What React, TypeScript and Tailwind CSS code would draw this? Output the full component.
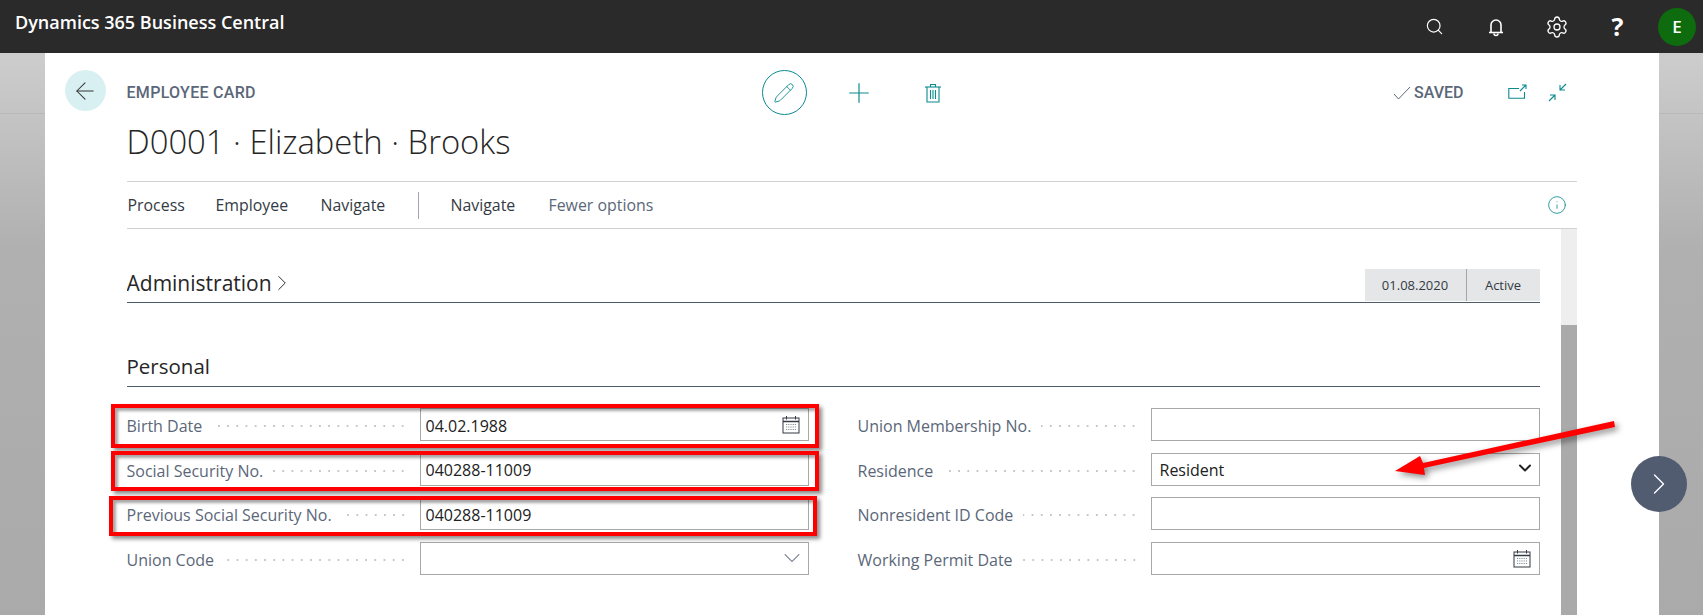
import { ArrowLeft, ChevronDown, ChevronRight, Info, Pencil, Plus, Search, Settings } from 'lucide-react';

function CalendarIcon() {
  return (
    <svg width="18" height="19" viewBox="0 0 18 19" fill="none" className="text-[#333a44]">
      <rect x="1" y="3" width="16" height="15" stroke="currentColor" />
      <path d="M1 6.5h16" stroke="currentColor" strokeWidth="1.5" />
      <path d="M4.5 1v3.5M13.5 1v3.5" stroke="currentColor" />
      <path d="M4 9.5h10M4 12h10M4 14.5h10" stroke="#8a8f96" strokeWidth="1.2" strokeDasharray="1.2 1" />
    </svg>
  );
}

function Field({
  label,
  value,
  right,
  dark,
}: {
  label: string;
  value?: string;
  right?: React.ReactNode;
  dark?: boolean;
}) {
  return (
    <div className="flex h-[33px] items-center">
      <div className="flex w-[293px] items-center pr-[12px]">
        <span className="pt-[3px] text-[16px] whitespace-nowrap text-[#5b6779]">{label}</span>
        <div className="mt-[3px] ml-[10px] h-[4px] flex-1 bg-[radial-gradient(circle,#c3c7cd_1px,transparent_1.3px)] bg-[length:9.2px_4px] bg-right bg-repeat-x" />
      </div>
      <div
        className={`flex h-full flex-1 items-center justify-between border border-[#a8a8a8] pr-[8px] text-[16px] text-[#212121] ${
          dark ? 'pl-[8px]' : 'pl-[5px]'
        }`}
      >
        <span className="pt-[2px]">{value}</span>
        {right}
      </div>
    </div>
  );
}

export default function App() {
  return (
    <div className="relative flex h-[615px] w-[1703px] flex-col overflow-hidden font-['Open_Sans',sans-serif]">
      {/* Top bar */}
      <header className="flex h-[53px] flex-shrink-0 items-center bg-[#2a2a2a] pl-[15px] text-white">
        <span className="mb-[9px] text-[18px] font-semibold">Dynamics 365 Business Central</span>
        <div className="ml-auto flex items-center pr-[7px]">
          <div className="flex w-[61px] justify-center">
            <Search size={19} strokeWidth={1.5} />
          </div>
          <div className="flex w-[61px] justify-center">
            <svg width="18" height="20" viewBox="0 0 18 20" fill="none" stroke="currentColor" strokeWidth="1.6">
              <path d="M4 15V8a5 5 0 0 1 10 0v7" />
              <path d="M2 15.5h14" />
              <path d="M7 16.5a2 2 0 0 0 4 0" />
            </svg>
          </div>
          <div className="flex w-[61px] justify-center">
            <Settings size={24} strokeWidth={1.3} />
          </div>
          <div className="flex w-[61px] justify-center text-[25px] leading-none font-bold">?</div>
          <div className="ml-[10px] flex h-[38px] w-[38px] items-center justify-center rounded-full bg-[#0e6b0e] text-[17px] font-semibold">
            E
          </div>
        </div>
      </header>

      {/* Dimmed page behind the card */}
      <div className="flex min-h-0 flex-1 justify-center bg-[linear-gradient(to_bottom,transparent_60px,rgba(0,0,0,0.06)_60px,rgba(0,0,0,0.06)_61px,transparent_61px),linear-gradient(to_bottom,#cdcdcd,#b0b0b0_35%,#aaaaaa)]">
        <div className="flex w-[1614px] bg-white">
          <div className="w-[82px] flex-shrink-0 pt-[17px] pl-[20px]">
            <div className="flex h-[41px] w-[41px] items-center justify-center rounded-full bg-[#d9f0f3] text-[#333]">
              <ArrowLeft size={28} strokeWidth={0.9} />
            </div>
          </div>

          <div className="mr-[82px] flex min-w-0 flex-1 flex-col">
            <div className="mt-[17px] flex h-[45px] items-center text-[#0b8a8f]">
              <span className="w-[635px] text-[16px] tracking-[0.3px] font-['Roboto',sans-serif] font-medium text-[#5b6779]">
                EMPLOYEE CARD
              </span>
              <div className="flex h-[45px] w-[45px] items-center justify-center rounded-full border border-[#0b8a8f]">
                <Pencil size={22} strokeWidth={1} />
              </div>
              <div className="ml-[36px]">
                <Plus size={32} strokeWidth={0.9} />
              </div>
              <div className="ml-[48px]">
                <svg width="20" height="20" viewBox="0 0 20 20" fill="none" stroke="currentColor" strokeWidth="1.1">
                  <path d="M2 4h16" />
                  <path d="M7.5 4V1.5h5V4" />
                  <path d="M4 4v15h12V4" />
                  <path d="M7.5 7v9M10 7v9M12.5 7v9" />
                </svg>
              </div>
              <div className="ml-auto flex items-center text-[#5b6779]">
                <svg width="18" height="14" viewBox="0 0 18 14" fill="none" className="mr-[3px]">
                  <path d="M1 8l4.5 5L17 1" stroke="currentColor" strokeWidth="1" />
                </svg>
                <span className="text-[16px] font-['Roboto',sans-serif] font-medium">SAVED</span>
              </div>
              <svg width="19" height="15" viewBox="0 0 19 15" fill="none" className="mt-[-2px] mr-[21px] ml-[44px]">
                <path d="M11 4.5H.8v9.7h15.7V8" stroke="currentColor" strokeWidth="1.1" />
                <path d="M12 7l6-6M14 1h4v4" stroke="currentColor" strokeWidth="1.1" />
              </svg>
              <svg width="19" height="19" viewBox="0 0 19 19" fill="none" className="mr-[10px]">
                <path d="M18 1l-6 6M12 2v5h5M1 18l6-6M2 12h5v5" stroke="currentColor" strokeWidth="1.1" />
              </svg>
            </div>

            <div className="h-[66px] text-[32.8px] leading-[54px] font-light whitespace-nowrap text-[#262626]">
              D0001 · Elizabeth · Brooks
            </div>

            <nav className="flex h-[48px] items-center border-y border-[#d2d2d2] pt-[2px] text-[15.9px] text-[#333a44]">
              <span className="ml-[1px] w-[88px]">Process</span>
              <span className="w-[105px]">Employee</span>
              <span className="w-[97px]">Navigate</span>
              <div className="mt-[-2px] mr-[32px] h-[27px] w-px bg-[#a0a5ad]" />
              <span className="w-[98px]">Navigate</span>
              <span className="text-[#5b6779]">Fewer options</span>
              <Info size={20} strokeWidth={1} className="mt-[-2px] mr-[10px] ml-auto text-[#0b8a8f]" />
            </nav>

            <div className="flex min-h-0 flex-1 overflow-hidden">
              <div className="w-[1413px] flex-shrink-0">
                <div className="mt-[40px] flex h-[34px] items-start justify-between border-b border-[#4d5b6c]">
                  <div className="flex items-center text-[#262626]">
                    <span className="text-[21px] leading-[28px] font-medium">Administration</span>
                    <ChevronRight size={26} strokeWidth={0.9} className="ml-[-3px]" />
                  </div>
                  <div className="flex h-[32px] bg-[#e5e6e7] text-[13px] text-[#333a44]">
                    <div className="flex w-[102px] items-center justify-center border-r border-[#a0a5ad] pt-[2px]">
                      01.08.2020
                    </div>
                    <div className="flex w-[73px] items-center justify-center pt-[2px]">Active</div>
                  </div>
                </div>

                <div className="mt-[50px] h-[34px] border-b border-[#4d5b6c] text-[20.5px] leading-[26px] font-medium text-[#262626]">
                  Personal
                </div>

                <div className="mt-[21px] grid grid-cols-2 gap-x-[49px] gap-y-[11.67px]">
                  <Field label="Birth Date" value="04.02.1988" right={<CalendarIcon />} />
                  <Field label="Union Membership No." />
                  <Field label="Social Security No." value="040288-11009" />
                  <Field
                    label="Residence"
                    value="Resident"
                    dark
                    right={<ChevronDown size={20} strokeWidth={2.4} className="mr-[-4px] mb-[3px] text-[#222]" />}
                  />
                  <Field label="Previous Social Security No." value="040288-11009" />
                  <Field label="Nonresident ID Code" />
                  <Field
                    label="Union Code"
                    right={<ChevronDown size={28} strokeWidth={0.9} className="mr-[-6px] text-[#5b6779]" />}
                  />
                  <Field label="Working Permit Date" right={<CalendarIcon />} />
                </div>
              </div>

              {/* Scrollbar */}
              <div className="ml-[21px] flex w-[16px] flex-col">
                <div className="h-[96px] bg-[#eeeeee]" />
                <div className="flex-1 bg-[#aaaaaa]" />
              </div>
            </div>
          </div>
        </div>
      </div>

      {/* Next record button */}
      <div className="absolute top-[456px] left-[1631px] flex h-[56px] w-[56px] items-center justify-center rounded-full bg-[#515c70] text-white">
        <ChevronRight size={36} strokeWidth={0.9} />
      </div>

      {/* Red annotations drawn on top of the screenshot */}
      <div className="absolute top-[404px] left-[111px] h-[44px] w-[708px] border-[4.5px] border-[#ff0000] shadow-[3px_3px_4px_rgba(0,0,0,0.45),inset_3px_3px_3px_rgba(0,0,0,0.35)]" />
      <div className="absolute top-[451px] left-[111px] h-[40px] w-[708px] border-[4.5px] border-[#ff0000] shadow-[3px_3px_4px_rgba(0,0,0,0.45),inset_3px_3px_3px_rgba(0,0,0,0.35)]" />
      <div className="absolute top-[496px] left-[109px] h-[40px] w-[708px] border-[4.5px] border-[#ff0000] shadow-[3px_3px_4px_rgba(0,0,0,0.45),inset_3px_3px_3px_rgba(0,0,0,0.35)]" />
      <svg
        width="240"
        height="70"
        viewBox="1385 415 240 70"
        className="absolute top-[415px] left-[1385px] drop-shadow-[3px_3px_3px_rgba(0,0,0,0.45)]"
      >
        <polygon points="1395,471 1420,456 1423,463 1614,421 1615,427 1424,468 1425,475" fill="#ff0000" />
      </svg>
    </div>
  );
}
